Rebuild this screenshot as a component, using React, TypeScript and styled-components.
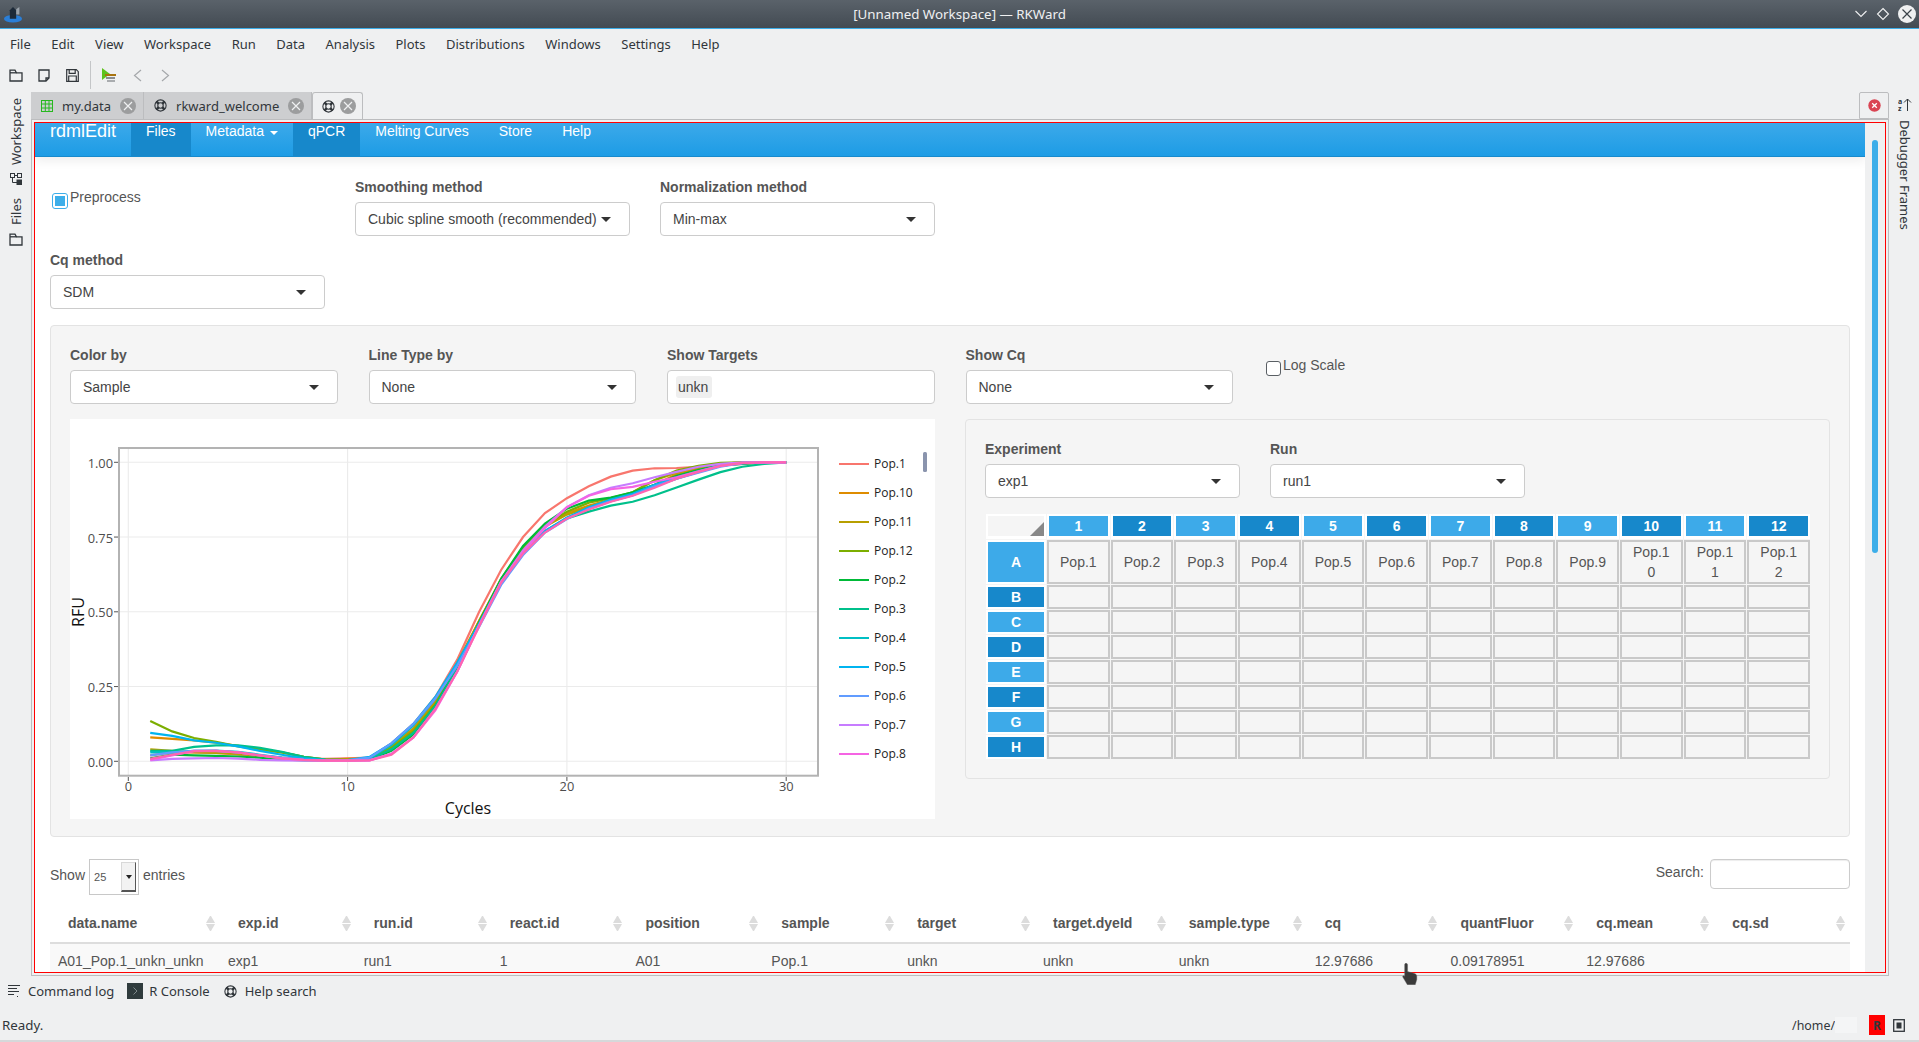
import React from "react";
import styled, { createGlobalStyle, css } from "styled-components";

const Global = createGlobalStyle`
  html, body { margin: 0; padding: 0; height: 100%; overflow: hidden; background: #eff0f1; }
  * { box-sizing: border-box; }
`;

const qt = `"Noto Sans", "Open Sans", sans-serif`;
const web = `"Liberation Sans", Arial, sans-serif`;

const Shell = styled.div`
  position: relative;
  width: 1919px;
  height: 1042px;
  display: flex;
  flex-direction: column;
  background: #eff0f1;
  color: #31363b;
  font: 13px ${qt};
  overflow: hidden;
`;
const TitleBar = styled.header`
  height: 29px;
  flex: none;
  border-bottom: 1px solid #3daee9;
  background: linear-gradient(#5a626a, #434b53);
  display: grid;
  grid-template-columns: 1fr auto 1fr;
  align-items: center;
  color: #eff0f1;
  font-size: 13.33px;
  padding: 0 3px;
`;
const TitleLeft = styled.div`display: flex; align-items: center;`;
const WindowButtons = styled.div`display: flex; align-items: center; justify-content: flex-end; gap: 8px;`;
const MenuBar = styled.nav`
  height: 30px;
  flex: none;
  display: flex;
  align-items: center;
  gap: 20.5px;
  padding-left: 10px;
`;
const MenuItem = styled.span`white-space: nowrap;`;
const ToolBar = styled.div`
  height: 32px;
  flex: none;
  display: flex;
  align-items: center;
  padding: 0 2px;
`;
const ToolButton = styled.span`
  width: 28px;
  height: 28px;
  display: flex;
  align-items: center;
  justify-content: center;
`;
const ToolSep = styled.span`width: 1px; height: 28px; background: #c4c6c8; margin: 0 4px;`;
const Main = styled.div`flex: 1; min-height: 0; display: flex;`;
const SideLeft = styled.aside`
  width: 31px;
  flex: none;
  display: flex;
  flex-direction: column;
  align-items: center;
  padding-top: 7px;
  gap: 8px;
`;
const SideRight = styled.aside`
  width: 30px;
  flex: none;
  display: flex;
  flex-direction: column;
  align-items: center;
  padding: 7px 0 0 2px;
  gap: 8px;
`;
const VerticalUp = styled.span<{ $mt?: number }>`
  writing-mode: vertical-rl;
  transform: rotate(180deg);
  white-space: nowrap;
  margin-top: ${(p) => p.$mt ?? 0}px;
`;
const VerticalDown = styled.span`writing-mode: vertical-rl; white-space: nowrap;`;
const Center = styled.div`flex: 1; min-width: 0; display: flex; flex-direction: column;`;
const TabStrip = styled.div`
  height: 28px;
  flex: none;
  padding-top: 1px;
  display: flex;
  justify-content: space-between;
`;
const Tabs = styled.div`display: flex;`;
const Tab = styled.div<{ $active?: boolean }>`
  display: flex;
  align-items: center;
  gap: ${(p) => (p.$active ? 5 : 6)}px;
  padding: ${(p) => (p.$active ? "0 6px 0 9px" : "0 7px 0 10px")};
  background: ${(p) => (p.$active ? "#eff0f1" : "#cdced0")};
  border-right: 1px solid #bcbdbf;
  ${(p) => p.$active && css`
    border: 1px solid #bcbdbf;
    border-bottom: none;
    border-radius: 3px 3px 0 0;
  `}
`;
const TabLabel = styled.span`margin: 0 3px 0 3px; white-space: nowrap;`;
const TabClose = styled.span`
  width: 16px;
  height: 16px;
  border-radius: 50%;
  background: #9c9d9e;
  display: flex;
  align-items: center;
  justify-content: center;
`;
const CornerButton = styled.div`
  width: 30px;
  border: 1px solid #bcbdbf;
  border-radius: 2px 2px 0 0;
  display: flex;
  align-items: center;
  justify-content: center;
`;
const Frame = styled.div`
  flex: 1;
  min-height: 0;
  border: 1px solid #bcbdbf;
  padding: 2px;
  display: flex;
`;
const RedBox = styled.div`
  flex: 1;
  min-width: 0;
  border: 1px solid #ff0000;
  display: flex;
  overflow: hidden;
`;
const Page = styled.main`
  flex: 1;
  min-width: 0;
  background: #fff;
  overflow: hidden;
  font: 14px/20px ${web};
  color: #555;
`;
const ScrollTrack = styled.div`
  width: 20px;
  flex: none;
  background: #eff0f1;
  padding: 17px 7px 0 7px;
`;
const ScrollHandle = styled.div`height: 413px; background: #3daee9; border-radius: 3px;`;
const Navbar = styled.div`
  height: 34px;
  display: flex;
  background: linear-gradient(#3ca9ea, #1d9ce5);
  border-bottom: 1px solid #178acc;
  box-shadow: 0 4px 10px rgba(0, 0, 0, 0.07);
  color: #fff;
  line-height: 14px;
  position: relative;
`;
const Brand = styled.span`font-size: 18px; padding: 1px 15px 0; white-space: nowrap;`;
const NavLink = styled.span<{ $active?: boolean }>`
  padding: 1px 15px 0;
  height: 33px;
  white-space: nowrap;
  background: ${(p) => (p.$active ? "#1788cb" : "transparent")};
  display: block;
`;
const NavCaret = styled.i`
  display: inline-block;
  border-top: 4px solid #fff;
  border-left: 4px solid transparent;
  border-right: 4px solid transparent;
  margin-left: 6px;
  vertical-align: 1px;
`;
const Content = styled.div`padding: 0 15px;`;
const FormRow = styled.div<{ $top: number }>`
  display: grid;
  grid-template-columns: repeat(3, 275px);
  column-gap: 30px;
  margin-top: ${(p) => p.$top}px;
`;
const Field = styled.div``;
const Label = styled.label`display: block; font-weight: 700; margin-bottom: 5px; white-space: nowrap;`;
const SelectBox = styled.div`
  position: relative;
  height: 34px;
  background: #fff;
  border: 1px solid #ccc;
  border-radius: 4px;
  padding: 6px 12px;
  color: #444;
  white-space: nowrap;
  &::after {
    content: "";
    position: absolute;
    right: 18px;
    top: 14px;
    border-top: 5px solid #333;
    border-left: 5px solid transparent;
    border-right: 5px solid transparent;
  }
`;
const Chip = styled.span`
  display: inline-block;
  background: #efefef;
  border-radius: 3px;
  padding: 0 4px 0 2px;
  height: 22px;
  line-height: 22px;
  margin-left: -4px;
  margin-top: -1px;
`;
const PlainBox = styled(SelectBox)`
  &::after { display: none; }
`;
const CheckRow = styled.div`display: flex; align-items: flex-start;`;
const CheckBox = styled.span<{ $on?: boolean }>`
  width: ${(p) => (p.$on ? 16 : 15)}px;
  height: ${(p) => (p.$on ? 16 : 15)}px;
  margin-top: 16px;
  margin-left: 2px;
  flex: none;
  border-radius: 3px;
  border: 1px solid ${(p) => (p.$on ? "#3daee9" : "#5a5f64")};
  background: #fff;
  padding: 2px;
  &::before {
    content: "";
    display: ${(p) => (p.$on ? "block" : "none")};
    width: 100%;
    height: 100%;
    background: #3daee9;
  }
`;
const CheckText = styled.span`margin-top: 10px; margin-left: 2px; white-space: nowrap;`;
const Well = styled.section`
  margin-top: 16px;
  height: 512px;
  background: #f5f5f5;
  border: 1px solid #e3e3e3;
  border-radius: 4px;
  padding: 19px;
`;
const ControlGrid = styled.div`
  display: grid;
  grid-template-columns: repeat(5, 267.5px);
  column-gap: 31px;
`;
const PlotRow = styled.div`
  margin-top: 15px;
  display: grid;
  grid-template-columns: 865px 865px;
  column-gap: 30px;
`;
const PlotBox = styled.div`width: 865px; height: 400px; background: #fff;`;
const InnerPanel = styled.div`
  height: 360px;
  background: #f5f5f5;
  border: 1px solid #e3e3e3;
  border-radius: 4px;
  padding: 19px;
`;
const PanelFields = styled.div`
  display: grid;
  grid-template-columns: 255px 255px;
  column-gap: 30px;
`;
const Plate = styled.div`
  margin-top: 16px;
  padding-left: 1px;
  display: grid;
  grid-template-columns: 60px repeat(12, 1fr);
  grid-template-rows: 25px 44px repeat(7, 24px);
  gap: 1px;
`;
const PlateCorner = styled.div`
  position: relative;
  border: 2px solid #fff;
  border-bottom-width: 3px;
  background: #f5f5f5;
  &::after {
    content: "";
    position: absolute;
    right: 0;
    bottom: 0;
    border-bottom: 14px solid #888;
    border-left: 14px solid transparent;
  }
`;
const PlateHead = styled.div<{ $dark: boolean }>`
  border: 2px solid #fff;
  border-bottom-width: 3px;
  background: ${(p) => (p.$dark ? "#1788cb" : "#3daae9")};
  background-clip: padding-box;
  color: #fff;
  font-weight: 700;
  display: flex;
  align-items: center;
  justify-content: center;
  line-height: 18px;
`;
const PlateRowHead = styled(PlateHead)`border-width: 2px;`;
const PlateCell = styled.div`
  border: 2px solid #c9c9c9;
  display: flex;
  align-items: center;
  justify-content: center;
  text-align: center;
  padding: 0 8px;
  word-break: break-all;
`;
const TableBar = styled.div`
  margin-top: 22px;
  height: 36px;
  display: flex;
  justify-content: space-between;
  align-items: flex-start;
`;
const ShowEntries = styled.div`display: flex; align-items: center; height: 36px; gap: 4px;`;
const BarText = styled.span`margin-bottom: 4px;`;
const NativeSelect = styled.div`
  width: 50px;
  height: 36px;
  border: 1px solid #c8c8c8;
  background: #fff;
  display: flex;
  align-items: center;
  justify-content: space-between;
  padding: 2px 2px 2px 4px;
  font-size: 11px;
  color: #555;
`;
const NativeArrow = styled.span`
  width: 15px;
  height: 100%;
  background: #f2f2f2;
  border: 1px solid #d8d8d8;
  border-right-color: #555;
  border-bottom: 2px solid #555;
  display: flex;
  align-items: center;
  justify-content: center;
  &::before {
    content: "";
    border-top: 4px solid #222;
    border-left: 3px solid transparent;
    border-right: 3px solid transparent;
  }
`;
const SearchWrap = styled.div`display: flex; align-items: center; gap: 6px;`;
const SearchInput = styled.div`
  width: 140px;
  height: 30px;
  border: 1px solid #ccc;
  border-radius: 4px;
  background: #fff;
  box-shadow: inset 0 1px 1px rgba(0, 0, 0, 0.075);
`;
const tableCols = "170px repeat(12, 1fr)";
const TableHead = styled.div`
  margin-top: 10px;
  height: 39px;
  display: grid;
  grid-template-columns: ${tableCols};
  align-items: center;
  border-bottom: 2px solid #ddd;
  font-weight: 700;
`;
const HeadCell = styled.div`
  position: relative;
  padding-left: 18px;
  white-space: nowrap;
  height: 37px;
  line-height: 37px;
`;
const Sorter = styled.i`
  position: absolute;
  right: 5px;
  top: 11px;
  width: 9px;
  height: 15px;
  display: flex;
  flex-direction: column;
  justify-content: space-between;
  &::before, &::after {
    content: "";
    border-left: 4px solid transparent;
    border-right: 4px solid transparent;
  }
  &::before { border-bottom: 7px solid #dcdcdc; }
  &::after { border-top: 7px solid #dcdcdc; }
`;
const TableRow = styled.div`
  height: 34px;
  display: grid;
  grid-template-columns: ${tableCols};
  align-items: center;
  background: #f9f9f9;
`;
const RowCell = styled.div`padding-left: 8px; white-space: nowrap;`;
const ToolRow = styled.div`
  height: 34px;
  flex: none;
  display: flex;
  align-items: center;
  padding: 0 0 4px 8px;
`;
const ToolTab = styled.span<{ $gap: number; $ml: number }>`
  display: flex;
  align-items: center;
  gap: ${(p) => p.$gap}px;
  margin-left: ${(p) => p.$ml}px;
`;
const StatusBar = styled.footer`
  height: 32px;
  flex: none;
  border-bottom: 2px solid #d6d8da;
  display: flex;
  align-items: center;
  justify-content: space-between;
  padding: 0 14px 0 2px;
  font-size: 13.33px;
`;
const StatusRight = styled.div`display: flex; align-items: center;`;
const HomePath = styled.span`font-size: 12.4px;`;
const Blur = styled.span`width: 22px; height: 16px; background: #f4f5f6; margin-right: 12px;`;
const RBadge = styled.span`
  width: 16px;
  height: 20px;
  background: #ff0000;
  color: #31363b;
  font-weight: 700;
  font-size: 12px;
  display: flex;
  align-items: center;
  justify-content: center;
  margin-right: 8px;
`;
const CursorWrap = styled.div`position: absolute; left: 1402px; top: 963px; line-height: 0;`;

const Folder = () => (
  <svg width="14" height="13" viewBox="0 0 14 13" fill="none" stroke="#31363b" strokeWidth="1.3">
    <path d="M1 12V1.2h5l1.4 2.6H13V12Z" />
    <path d="M1 3.8h6.4" />
  </svg>
);
const Doc = () => (
  <svg width="12" height="13" viewBox="0 0 12 13" fill="none" stroke="#31363b" strokeWidth="1.3">
    <path d="M1 1h10v8l-3 3H1Z" />
    <path d="M8 12V9h3" />
  </svg>
);
const Save = () => (
  <svg width="13" height="13" viewBox="0 0 13 13" fill="none" stroke="#31363b" strokeWidth="1.2">
    <path d="M.7.7h9.6l2 2v9.6H.7Z" />
    <path d="M3.2.7v3.6h6V.7M2.7 12.3V7h7.6v5.3" />
  </svg>
);
const RunIcon = () => (
  <svg width="16" height="14" viewBox="0 0 16 14">
    <path d="M1 0l8 6-8 6Z" fill="#5fc21c" />
    <rect x="4" y="6" width="11" height="2" fill="#a8730f" />
    <rect x="5" y="9" width="9" height="2" fill="#8a8d90" />
    <rect x="6" y="12" width="8" height="2" fill="#a9acaf" />
  </svg>
);
const Chevron = ({ dir }: { dir: "l" | "r" }) => (
  <svg width="9" height="13" viewBox="0 0 9 13" fill="none" stroke="#a5a8ab" strokeWidth="1.2">
    <path d={dir === "l" ? "M8 1L1.5 6.5 8 12" : "M1 1l6.5 5.5L1 12"} />
  </svg>
);
const Lifebuoy = () => (
  <svg width="13" height="13" viewBox="0 0 12 12" fill="none" stroke="#31363b">
    <circle cx="6" cy="6" r="5.2" strokeWidth="1" />
    <circle cx="6" cy="6" r="2.5" strokeWidth="1" />
    <path d="M2.2 2.2l2 2M9.8 2.2l-2 2M2.2 9.8l2-2M9.8 9.8l-2-2" strokeWidth="2.4" />
  </svg>
);
const SheetIcon = () => (
  <svg width="12" height="12" viewBox="0 0 12 12" fill="none" stroke="#27b81f" strokeWidth="1">
    <rect x=".5" y=".5" width="11" height="11" />
    <path d="M.5 4h11M.5 8h11M4.3.5v11M8 .5v11" />
  </svg>
);
const SmallX = () => (
  <svg width="10" height="10" viewBox="0 0 10 10" stroke="#eff0f1" strokeWidth="1.2">
    <path d="M1 1l8 8M9 1L1 9" />
  </svg>
);
const TreeIcon = () => (
  <svg width="12" height="12" viewBox="0 0 12 12" fill="none" stroke="#31363b">
    <rect x=".5" y=".5" width="4" height="4" />
    <rect x="7.5" y=".5" width="4" height="4" />
    <rect x="7" y="7" width="5" height="5" fill="#31363b" />
    <path d="M4.5 2.5h3M2.5 4.5v5H7" />
  </svg>
);
const SortAZ = () => (
  <svg width="14" height="14" viewBox="0 0 14 14" fill="none" stroke="#31363b" strokeWidth="1">
    <text x="0" y="5.5" fontSize="7" fontWeight="700" fontFamily={qt} fill="#31363b" stroke="none">a</text>
    <text x="0" y="13" fontSize="7" fontWeight="700" fontFamily={qt} fill="#31363b" stroke="none">z</text>
    <path d="M9.5 13V1M6 4.5L9.5 1 13 4.5" />
  </svg>
);
const LogIcon = () => (
  <svg width="12" height="12" viewBox="0 0 12 12" stroke="#31363b" strokeWidth="1">
    <path d="M0 .5h12M0 3.5h9M0 6.5h11M0 9.5h6M9 11.5h1" />
  </svg>
);
const ConsoleIcon = () => (
  <svg width="16" height="16" viewBox="0 0 16 16" fill="none">
    <rect width="16" height="16" fill="#2f3b3d" />
    <path d="M6.5 4.5l3.5 3.5-3.5 3.5" stroke="#7f8a8c" />
  </svg>
);
const RedCross = () => (
  <svg width="13" height="13" viewBox="0 0 13 13">
    <circle cx="6.5" cy="6.5" r="6.2" fill="#da4453" />
    <path d="M4.2 4.2l4.6 4.6M8.8 4.2l-4.6 4.6" stroke="#fff" strokeWidth="1.3" />
  </svg>
);
const AppLogo = () => (
  <svg width="20" height="17" viewBox="0 0 18 16">
    <ellipse cx="9" cy="12" rx="8.5" ry="3.5" fill="#2a7fd8" />
    <path d="M6 12V4l3-3 3 3v8Z" fill="#1d2a38" />
    <path d="M12 3l3-2v7h-3Z" fill="#9aa2aa" />
  </svg>
);
const MinChevron = () => (
  <svg width="14" height="8" viewBox="0 0 14 8" fill="none" stroke="#eff0f1" strokeWidth="1.1">
    <path d="M1.5 1l5.5 5.5L12.5 1" />
  </svg>
);
const Diamond = () => (
  <svg width="14" height="14" viewBox="0 0 14 14" fill="none" stroke="#eff0f1" strokeWidth="1.1">
    <path d="M7 1.5L12.5 7 7 12.5 1.5 7Z" />
  </svg>
);
const CloseCircle = () => (
  <svg width="18" height="18" viewBox="0 0 18 18">
    <circle cx="9" cy="9" r="9" fill="#eff0f1" />
    <path d="M4.5 4.5l9 9M13.5 4.5l-9 9" stroke="#3a4249" strokeWidth="1.2" />
  </svg>
);
const WindowSquare = () => (
  <svg width="12" height="13" viewBox="0 0 12 13">
    <rect x=".7" y=".7" width="10.6" height="11.6" fill="none" stroke="#31363b" strokeWidth="1.3" />
    <rect x="3.5" y="3.5" width="5" height="6" fill="#31363b" />
  </svg>
);
const Hand = () => (
  <svg width="16" height="22" viewBox="0 0 15 21">
    <path d="M3.6.3c1 0 1.6.6 1.6 1.5v6.4l6 1.6c1.8.5 2.8 1.4 2.8 3v3l-1.5 5H5L.6 13.4c-.5-.8.5-1.7 1.2-1.2l.6.5V1.8C2.4.9 2.8.3 3.6.3Z" fill="#3a3a3a" stroke="#6a6a6a" strokeWidth=".4" />
  </svg>
);

type Series = { name: string; color: string; low: number[]; high: number[] };
const series: Series[] = [
  { name: "Pop.1", color: "#F8766D", low: [.02,.03,.03,.028,.022,.015,.01,.008,.008,.01,.012], high: [.06,.125,.215,.34,.5,.64,.75,.83,.88,.92,.952,.972,.98,.981,.985,.99,.995,1,1] },
  { name: "Pop.10", color: "#DE8C00", low: [.08,.075,.07,.062,.052,.04,.03,.015,.006,.008,.01], high: [.05,.11,.2,.33,.47,.61,.715,.785,.83,.855,.875,.895,.925,.96,.98,.995,1,1,1] },
  { name: "Pop.11", color: "#B79F00", low: [.04,.035,.03,.028,.025,.018,.012,.008,.005,.006,.01], high: [.05,.105,.195,.32,.47,.605,.715,.785,.825,.85,.875,.9,.94,.965,.985,.995,1,1,1] },
  { name: "Pop.12", color: "#7CAE00", low: [.135,.1,.078,.065,.05,.04,.03,.015,.006,.005,.008], high: [.045,.1,.19,.315,.46,.605,.715,.79,.835,.865,.88,.9,.94,.972,.988,.998,1,1,1] },
  { name: "Pop.2", color: "#00BA38", low: [.01,.022,.02,.018,.016,.012,.006,.003,.002,.003,.005], high: [.035,.09,.185,.315,.465,.61,.72,.795,.845,.872,.882,.9,.925,.955,.975,.99,.995,1,1] },
  { name: "Pop.3", color: "#00C08B", low: [.035,.035,.048,.053,.053,.045,.032,.015,.006,.004,.006], high: [.04,.095,.185,.31,.46,.6,.7,.77,.812,.835,.855,.868,.89,.916,.942,.967,.985,.995,1] },
  { name: "Pop.4", color: "#00BFC4", low: [.03,.03,.035,.036,.032,.022,.012,.006,.003,.003,.01], high: [.055,.12,.21,.325,.46,.6,.7,.77,.815,.845,.87,.89,.92,.945,.968,.988,.997,1,1] },
  { name: "Pop.5", color: "#00B4F0", low: [.095,.085,.07,.062,.05,.035,.022,.01,.004,.004,.015], high: [.06,.125,.215,.33,.46,.6,.695,.77,.815,.85,.875,.895,.925,.95,.97,.99,.998,1,1] },
  { name: "Pop.6", color: "#619CFF", low: [.02,.03,.035,.035,.03,.02,.012,.006,.003,.003,.012], high: [.06,.125,.21,.32,.45,.59,.69,.765,.81,.845,.87,.89,.92,.945,.965,.985,.997,1,1] },
  { name: "Pop.7", color: "#C77CFF", low: [.003,.008,.01,.011,.009,.005,.003,.002,.002,.002,.003], high: [.025,.08,.175,.3,.455,.6,.705,.785,.85,.89,.915,.93,.95,.968,.985,.995,1,1,1] },
  { name: "Pop.8", color: "#F564E3", low: [.005,.02,.035,.035,.03,.02,.01,.005,.002,.002,.003], high: [.025,.08,.17,.3,.455,.6,.7,.78,.85,.888,.91,.918,.935,.95,.97,.988,.997,1,1] },
  { name: "Pop.9", color: "#FF64B0", low: [.008,.022,.033,.035,.03,.02,.01,.005,.002,.002,.003], high: [.022,.08,.175,.3,.452,.597,.695,.765,.812,.842,.868,.888,.915,.945,.968,.988,.998,1,1] },
];
const px = (c: number) => 58.3 + c * 21.93;
const py = (v: number) => 342.3 - v * 299;
const plotFont = `"Open Sans", "Noto Sans", sans-serif`;

const Chart = () => (
  <svg width="865" height="400" viewBox="0 0 865 400">
    {[0, 0.25, 0.5, 0.75, 1].map((v) => (
      <line key={v} x1="49" x2="748" y1={py(v)} y2={py(v)} stroke="#ebebeb" strokeWidth="1.1" />
    ))}
    {[0, 10, 20, 30].map((c) => (
      <line key={c} x1={px(c)} x2={px(c)} y1="29" y2="356.7" stroke="#ebebeb" strokeWidth="1.1" />
    ))}
    {series.map((s) => (
      <polyline
        key={s.name}
        fill="none"
        stroke={s.color}
        strokeWidth="2.2"
        points={[...s.low, ...s.high].map((v, i) => `${px(i + 1)},${py(v)}`).join(" ")}
      />
    ))}
    <rect x="49" y="29" width="699" height="327.7" fill="none" stroke="#b3b3b3" strokeWidth="2" />
    {[0, 0.25, 0.5, 0.75, 1].map((v) => (
      <g key={v}>
        <line x1="44" x2="48" y1={py(v)} y2={py(v)} stroke="#555" />
        <text x="43" y={py(v) + 5.5} textAnchor="end" fontFamily={plotFont} fontSize="12.8" fill="#4d4d4d">{v.toFixed(2)}</text>
      </g>
    ))}
    {[0, 10, 20, 30].map((c) => (
      <g key={c}>
        <line x1={px(c)} x2={px(c)} y1="358" y2="362" stroke="#555" />
        <text x={px(c)} y="372" textAnchor="middle" fontFamily={plotFont} fontSize="12.8" fill="#4d4d4d">{c}</text>
      </g>
    ))}
    <text x="398" y="395" textAnchor="middle" fontFamily={plotFont} fontSize="16" fill="#111">Cycles</text>
    <text transform="translate(14,193) rotate(-90)" textAnchor="middle" fontFamily={plotFont} fontSize="16" fill="#111">RFU</text>
    {series.slice(0, 11).map((s, i) => (
      <g key={s.name}>
        <line x1="769" x2="799" y1={45 + i * 29} y2={45 + i * 29} stroke={s.color} strokeWidth="2" />
        <text x="804" y={49 + i * 29} fontFamily={plotFont} fontSize="12" fill="#222">{s.name}</text>
      </g>
    ))}
    <rect x="853" y="33" width="4" height="20" rx="1.5" fill="#8a94ad" />
  </svg>
);

const menus = ["File", "Edit", "View", "Workspace", "Run", "Data", "Analysis", "Plots", "Distributions", "Windows", "Settings", "Help"];
const cols = Array.from({ length: 12 }, (_, i) => i + 1);
const rows = ["A", "B", "C", "D", "E", "F", "G", "H"];
const headers = ["data.name", "exp.id", "run.id", "react.id", "position", "sample", "target", "target.dyeId", "sample.type", "cq", "quantFluor", "cq.mean", "cq.sd"];
const rowData = ["A01_Pop.1_unkn_unkn", "exp1", "run1", "1", "A01", "Pop.1", "unkn", "unkn", "unkn", "12.97686", "0.09178951", "12.97686", ""];

export default function App() {
  return (
    <Shell>
      <Global />
      <TitleBar>
        <TitleLeft><AppLogo /></TitleLeft>
        <span>[Unnamed Workspace] — RKWard</span>
        <WindowButtons><MinChevron /><Diamond /><CloseCircle /></WindowButtons>
      </TitleBar>
      <MenuBar>{menus.map((m) => <MenuItem key={m}>{m}</MenuItem>)}</MenuBar>
      <ToolBar>
        <ToolButton><Folder /></ToolButton>
        <ToolButton><Doc /></ToolButton>
        <ToolButton><Save /></ToolButton>
        <ToolSep />
        <ToolButton><RunIcon /></ToolButton>
        <ToolButton><Chevron dir="l" /></ToolButton>
        <ToolButton><Chevron dir="r" /></ToolButton>
      </ToolBar>
      <Main>
        <SideLeft>
          <VerticalUp>Workspace</VerticalUp>
          <TreeIcon />
          <VerticalUp $mt={5}>Files</VerticalUp>
          <Folder />
        </SideLeft>
        <Center>
          <TabStrip>
            <Tabs>
              <Tab><SheetIcon /><TabLabel>my.data</TabLabel><TabClose><SmallX /></TabClose></Tab>
              <Tab><Lifebuoy /><TabLabel>rkward_welcome</TabLabel><TabClose><SmallX /></TabClose></Tab>
              <Tab $active><Lifebuoy /><TabClose><SmallX /></TabClose></Tab>
            </Tabs>
            <CornerButton><RedCross /></CornerButton>
          </TabStrip>
          <Frame>
            <RedBox>
              <Page>
                <Navbar>
                  <Brand>rdmlEdit</Brand>
                  <NavLink $active>Files</NavLink>
                  <NavLink>Metadata<NavCaret /></NavLink>
                  <NavLink $active>qPCR</NavLink>
                  <NavLink>Melting Curves</NavLink>
                  <NavLink>Store</NavLink>
                  <NavLink>Help</NavLink>
                </Navbar>
                <Content>
                  <FormRow $top={20}>
                    <CheckRow><CheckBox $on /><CheckText>Preprocess</CheckText></CheckRow>
                    <Field><Label>Smoothing method</Label><SelectBox>Cubic spline smooth (recommended)</SelectBox></Field>
                    <Field><Label>Normalization method</Label><SelectBox>Min-max</SelectBox></Field>
                  </FormRow>
                  <FormRow $top={14}>
                    <Field><Label>Cq method</Label><SelectBox>SDM</SelectBox></Field>
                  </FormRow>
                  <Well>
                    <ControlGrid>
                      <Field><Label>Color by</Label><SelectBox>Sample</SelectBox></Field>
                      <Field><Label>Line Type by</Label><SelectBox>None</SelectBox></Field>
                      <Field><Label>Show Targets</Label><PlainBox><Chip>unkn</Chip></PlainBox></Field>
                      <Field><Label>Show Cq</Label><SelectBox>None</SelectBox></Field>
                      <CheckRow><CheckBox /><CheckText>Log Scale</CheckText></CheckRow>
                    </ControlGrid>
                    <PlotRow>
                      <PlotBox><Chart /></PlotBox>
                      <InnerPanel>
                        <PanelFields>
                          <Field><Label>Experiment</Label><SelectBox>exp1</SelectBox></Field>
                          <Field><Label>Run</Label><SelectBox>run1</SelectBox></Field>
                        </PanelFields>
                        <Plate>
                          <PlateCorner />
                          {cols.map((c) => <PlateHead key={c} $dark={c % 2 === 0}>{c}</PlateHead>)}
                          {rows.map((r, ri) => (
                            <React.Fragment key={r}>
                              <PlateRowHead $dark={ri % 2 === 1}>{r}</PlateRowHead>
                              {cols.map((c) => <PlateCell key={c}>{ri === 0 ? `Pop.${c}` : ""}</PlateCell>)}
                            </React.Fragment>
                          ))}
                        </Plate>
                      </InnerPanel>
                    </PlotRow>
                  </Well>
                  <TableBar>
                    <ShowEntries><BarText>Show</BarText><NativeSelect>25<NativeArrow /></NativeSelect><BarText>entries</BarText></ShowEntries>
                    <SearchWrap><BarText>Search:</BarText><SearchInput /></SearchWrap>
                  </TableBar>
                  <TableHead>
                    {headers.map((h) => <HeadCell key={h}>{h}<Sorter /></HeadCell>)}
                  </TableHead>
                  <TableRow>
                    {rowData.map((v, i) => <RowCell key={i}>{v}</RowCell>)}
                  </TableRow>
                </Content>
              </Page>
              <ScrollTrack><ScrollHandle /></ScrollTrack>
            </RedBox>
          </Frame>
        </Center>
        <SideRight>
          <SortAZ />
          <VerticalDown>Debugger Frames</VerticalDown>
        </SideRight>
      </Main>
      <ToolRow>
        <ToolTab $gap={8} $ml={0}><LogIcon />Command log</ToolTab>
        <ToolTab $gap={6} $ml={13}><ConsoleIcon />R Console</ToolTab>
        <ToolTab $gap={8} $ml={14}><Lifebuoy />Help search</ToolTab>
      </ToolRow>
      <StatusBar>
        <span>Ready.</span>
        <StatusRight>
          <HomePath>/home/</HomePath>
          <Blur />
          <RBadge>R</RBadge>
          <WindowSquare />
        </StatusRight>
      </StatusBar>
      <CursorWrap><Hand /></CursorWrap>
    </Shell>
  );
}
